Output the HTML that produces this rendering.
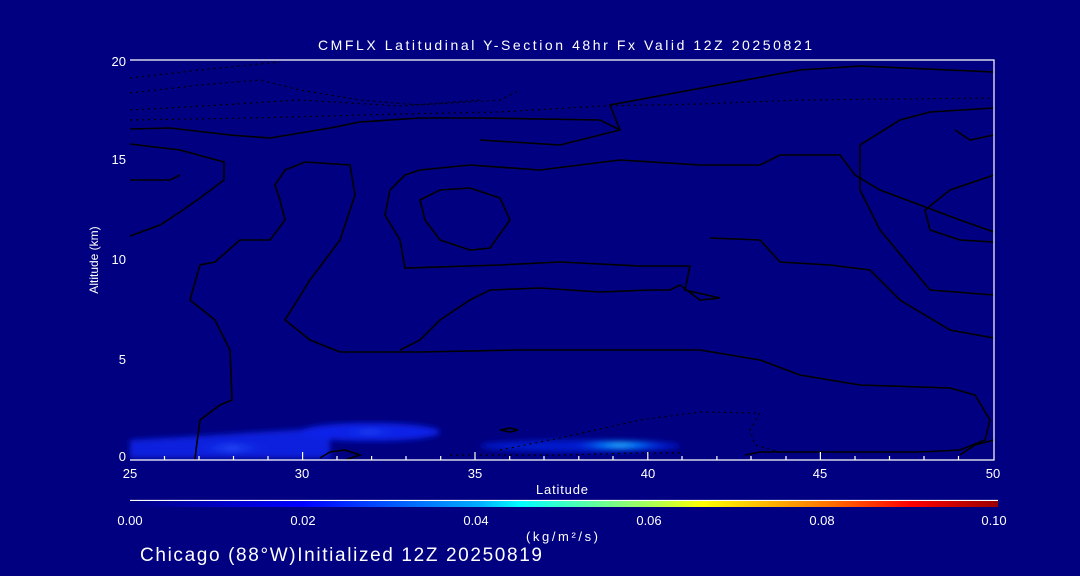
<!DOCTYPE html>
<html><head><meta charset="utf-8"><style>
html,body{margin:0;padding:0;background:#000080;width:1080px;height:576px;overflow:hidden}
svg{display:block}
text{font-family:"Liberation Sans",sans-serif;fill:#fff}
</style></head><body>
<svg width="1080" height="576" viewBox="0 0 1080 576">
<defs>
<linearGradient id="cb" x1="0" x2="1">
<stop offset="0" stop-color="#000080"/>
<stop offset="0.2" stop-color="#0000ff"/>
<stop offset="0.4" stop-color="#00aaff"/>
<stop offset="0.45" stop-color="#00ffff"/>
<stop offset="0.6" stop-color="#aaff55"/>
<stop offset="0.66" stop-color="#ffff00"/>
<stop offset="0.8" stop-color="#ff7700"/>
<stop offset="0.9" stop-color="#ff0000"/>
<stop offset="1" stop-color="#990000"/>
</linearGradient>
<radialGradient id="b1"><stop offset="0" stop-color="#2a50ff"/><stop offset="1" stop-color="#0010d0" stop-opacity="0"/></radialGradient>
<radialGradient id="b2"><stop offset="0" stop-color="#40e0ff"/><stop offset="0.4" stop-color="#0080ff"/><stop offset="1" stop-color="#0010d0" stop-opacity="0"/></radialGradient>
<filter id="bl"><feGaussianBlur stdDeviation="3"/></filter>
</defs>
<rect width="1080" height="576" fill="#000080"/>
<g filter="url(#bl)">
<path d="M130 440 L200 436 L260 432 L330 428 L330 458 L130 458 Z" fill="#0a24e8" opacity="0.9"/>
<ellipse cx="232" cy="448" rx="50" ry="9" fill="url(#b1)"/>
<ellipse cx="370" cy="432" rx="70" ry="9" fill="#0a24e8"/>
<ellipse cx="370" cy="432" rx="40" ry="5" fill="url(#b1)"/>
<ellipse cx="580" cy="446" rx="100" ry="6" fill="#0020e0" opacity="0.8"/>
<ellipse cx="620" cy="445" rx="55" ry="5" fill="url(#b2)"/>
</g>
<g fill="none" stroke="#000" stroke-width="1.6">
<path d="M130 129 L170 128 L230 135 L270 138 L330 128 L360 122 L420 118 L480 118 L600 120 L620 130"/>
<path d="M130 144 L180 150 L224 162 L224 180 L200 198 L180 212 L160 225 L130 236"/>
<path d="M130 180 L170 180 L180 175"/>
<path d="M305 162 L285 170 L275 185 L280 200 L285 220 L270 240 L240 240 L215 262 L200 265 L190 300 L215 320 L230 350 L232 400 L220 405 L200 420 L196 450 L195 460"/>
<path d="M305 162 L350 165 L355 195 L340 240 L310 280 L285 320 L310 340 L340 352 L420 352 L520 350 L600 350 L700 350 L760 360 L800 375 L860 385 L950 388 L975 395 L990 420 L985 440 L960 450 L920 452 L830 452 L760 452 L745 455"/>
<path d="M405 175 L390 190 L385 215 L400 240 L405 268 L500 265 L560 262 L640 266 L690 266 L685 290 L720 298 L700 300 L680 285 L670 290 L650 290 L600 292 L540 288 L490 290 L470 300 L440 320 L420 340 L400 350"/>
<path d="M405 175 L420 170 L470 165 L540 170 L620 160 L700 165 L760 165 L780 155 L840 155 L855 175 L880 190 L920 205 L960 220 L994 232"/>
<path d="M420 200 L440 190 L470 188 L500 198 L510 220 L490 248 L470 250 L440 240 L425 220 Z"/>
<path d="M480 140 L560 145 L620 130 L610 105 L680 92 L800 70 L860 66 L994 72"/>
<path d="M994 108 L930 112 L900 120 L860 145 L860 190 L880 230 L930 290 L994 295"/>
<path d="M994 175 L950 190 L925 210 L930 230 L960 240 L994 242"/>
<path d="M994 135 L970 140 L955 130"/>
<path d="M710 238 L760 240 L780 262 L830 265 L870 270 L900 300 L950 330 L994 338"/>
<path d="M960 455 L975 445 L994 440"/>
<path d="M320 458 L330 452 L345 450 L360 455 L345 460"/>
<path d="M500 430 L510 428 L518 430 L510 432 Z"/>
</g>
<g fill="none" stroke="#000" stroke-width="1.2" stroke-dasharray="2 4">
<path d="M130 78 L200 70 L280 62"/>
<path d="M130 93 L200 85 L260 80 L300 90 L360 100 L420 105 L500 100 L520 90"/>
<path d="M130 110 L220 105 L300 100 L400 106 L480 100"/>
<path d="M130 120 L250 118 L400 114 L500 112 L600 106 L700 104 L800 100 L994 98"/>
<path d="M500 450 L560 438 L640 420 L700 412 L760 413 L750 430 L755 445 L780 452"/>
<path d="M450 455 L560 455 L640 453 L680 453"/>
</g>
<g stroke="#fff" stroke-width="1.2" fill="none">
<path d="M130 60 H994 V460 H130"/>
<path d="M164.5 460v-4M199 460v-4M233.5 460v-4M268 460v-4M302.6 460v-8M337 460v-4M371.6 460v-4M406 460v-4M440.7 460v-4M475 460v-8M509.7 460v-4M544 460v-4M578.8 460v-4M613 460v-4M647.8 460v-8M682 460v-4M716.9 460v-4M751 460v-4M786 460v-4M820.4 460v-8M855 460v-4M889.5 460v-4M924 460v-4M958.5 460v-4"/>
<path d="M130 500.5 H998"/>
</g>
<rect x="130" y="501" width="868" height="6" fill="url(#cb)"/>
<g font-size="13" text-anchor="middle">
<text x="318" y="50" text-anchor="start" font-size="14" textLength="494" lengthAdjust="spacing">CMFLX Latitudinal Y-Section 48hr  Fx Valid 12Z 20250821</text>
<text x="130" y="478">25</text><text x="302" y="478">30</text><text x="475" y="478">35</text>
<text x="648" y="478">40</text><text x="820" y="478">45</text><text x="993" y="478">50</text>
<text x="536" y="494" text-anchor="start" textLength="52" lengthAdjust="spacing">Latitude</text>
<text x="130" y="525">0.00</text><text x="303" y="525">0.02</text><text x="476" y="525">0.04</text>
<text x="649" y="525">0.06</text><text x="822" y="525">0.08</text><text x="994" y="525">0.10</text>
<text x="526" y="541" text-anchor="start" textLength="72" lengthAdjust="spacing">(kg/m²/s)</text>
</g>
<g font-size="13" text-anchor="end">
<text x="126" y="66">20</text><text x="126" y="164">15</text><text x="126" y="264">10</text>
<text x="126" y="364">5</text><text x="126" y="461">0</text>
</g>
<text x="98" y="260" font-size="12" text-anchor="middle" transform="rotate(-90 98 260)">Altitude (km)</text>
<text x="140" y="561" font-size="19" textLength="402" lengthAdjust="spacing">Chicago (88°W)Initialized 12Z 20250819</text>
</svg>
</body></html>
